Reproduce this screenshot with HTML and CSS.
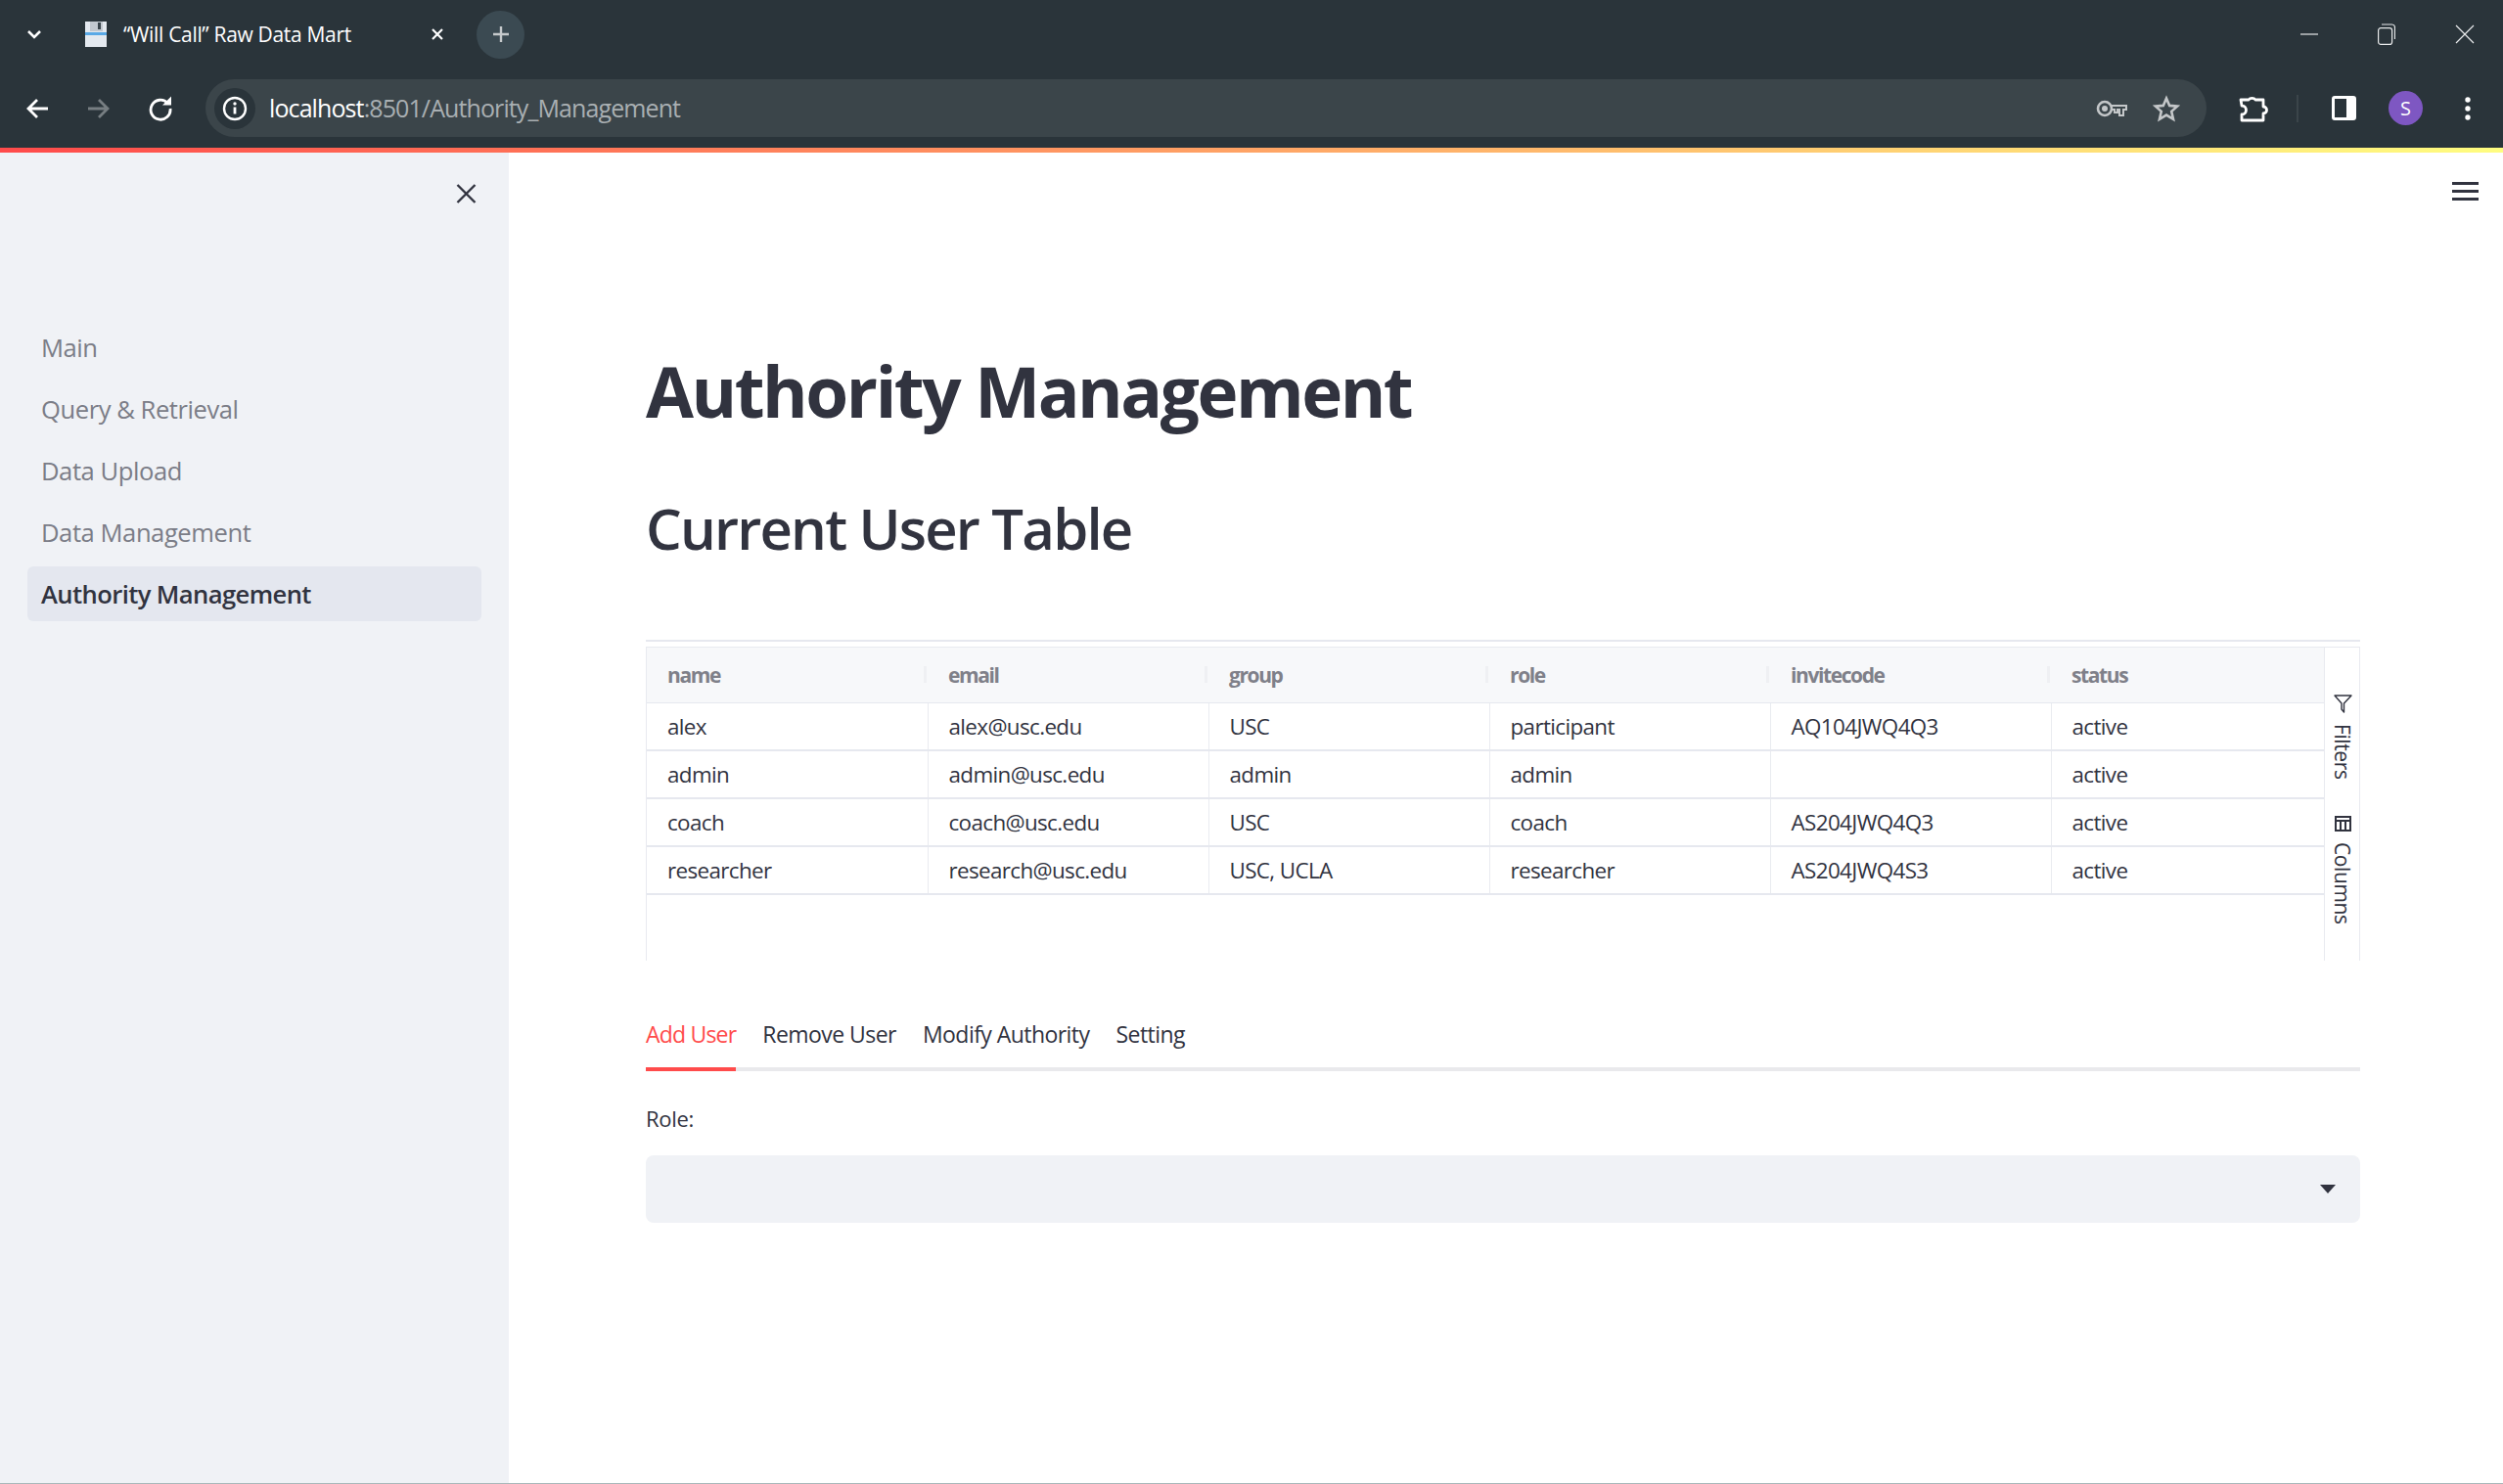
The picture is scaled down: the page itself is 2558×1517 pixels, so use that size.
FILE: index.html
```html
<!DOCTYPE html>
<html lang="en">
<head>
    <meta charset="UTF-8">
    <meta name="viewport" content="width=device-width, initial-scale=1.0">
    <title>Authority Management</title>
    <link rel="stylesheet" href="styles.css">
</head>
<body>
    <header class="browser">
        <div class="tabstrip">
            <svg class="tab-list" width="16" height="10" viewBox="0 0 16 10"><path d="M2 2l6 6 6-6" fill="none" stroke="#fff" stroke-width="2.6"/></svg>
            <svg class="favicon" width="26" height="28" viewBox="0 0 26 28"><path d="M2 1h22v26H2z" fill="#e4e9ef"/><path d="M7 1h13v10H7z" fill="#c2c8cf"/><path d="M15 2h3v7h-3z" fill="#39444b"/><path d="M2 12h22v3H2z" fill="#5aa9e6"/></svg>
            <span class="tab-title">“Will Call” Raw Data Mart</span>
            <svg class="tab-close" width="14" height="14" viewBox="0 0 14 14"><path d="M2 2l10 10M12 2L2 12" stroke="#fff" stroke-width="2.2"/></svg>
            <span class="new-tab"><svg width="18" height="18" viewBox="0 0 18 18"><path d="M9 1v16M1 9h16" stroke="#c5c9cb" stroke-width="2.4"/></svg></span>
            <div class="window-btns">
                <svg width="18" height="18" viewBox="0 0 18 18"><path d="M0 9h18" stroke="#e8eaeb" stroke-width="1.2"/></svg>
                <svg width="18" height="22" viewBox="0 0 18 22"><rect x=".6" y="4.6" width="14" height="16.8" rx="2.5" fill="none" stroke="#e8eaeb" stroke-width="1.2"/><path d="M4 1h10.5a3 3 0 0 1 3 3v12" fill="none" stroke="#e8eaeb" stroke-width="1.2"/></svg>
                <svg width="20" height="20" viewBox="0 0 20 20"><path d="M1 1l18 18M19 1L1 19" stroke="#e8eaeb" stroke-width="1.2"/></svg>
            </div>
        </div>
        <div class="toolbar">
            <svg class="nav-back" width="26" height="24" viewBox="0 0 26 24"><path d="M24 12H4M13 3l-9 9 9 9" fill="none" stroke="#fff" stroke-width="2.8"/></svg>
            <svg class="nav-forward" width="26" height="24" viewBox="0 0 26 24"><path d="M2 12h20M13 3l9 9-9 9" fill="none" stroke="#777e82" stroke-width="2.8"/></svg>
            <svg class="nav-reload" width="26" height="26" viewBox="0 0 26 26"><path d="M20.5 7.5A10 10 0 1 0 23 13" fill="none" stroke="#fff" stroke-width="2.8"/><path d="M15 9.5h9v-9z" fill="#fff"/></svg>
            <div class="omnibox">
                <span class="site-info"><svg width="26" height="26" viewBox="0 0 26 26"><circle cx="13" cy="13" r="11" fill="none" stroke="#fff" stroke-width="2.4"/><path d="M13 11.5v7" stroke="#fff" stroke-width="2.8"/><circle cx="13" cy="8" r="1.7" fill="#fff"/></svg></span>
                <span class="url"><span class="url-host">localhost</span>:8501/Authority_Management</span>
                <svg class="key" width="32" height="20" viewBox="0 0 32 20"><circle cx="9" cy="10" r="7" fill="none" stroke="#c4c7c9" stroke-width="2.6"/><circle cx="9" cy="10" r="3" fill="#c4c7c9"/><path d="M16 7h15v4h-3v6h-4v-6h-2v3h-3v-3h-3z" fill="none" stroke="#c4c7c9" stroke-width="2"/></svg>
                <svg class="star" width="28" height="28" viewBox="0 0 28 28"><path d="M14 3.500l3.200 7.400 8 .7-6 5.300 1.800 7.900L14 20.600l-7 4.200 1.800-7.900-6-5.300 8-.7z" fill="none" stroke="#c4c7c9" stroke-width="2.6"/></svg>
            </div>
            <svg class="puzzle" width="30" height="28" viewBox="0 0 30 28"><path d="M2 5h8a4 3 0 0 1 7 0h8v7a3.500 3.500 0 0 1 0 7v7H3v-6a4 4 0 0 0 0-9z" fill="none" stroke="#fff" stroke-width="2.8" stroke-linejoin="round"/></svg>
            <span class="tool-sep"></span>
            <svg class="side-panel" width="25" height="25" viewBox="0 0 25 25"><rect x="1.500" y="1.500" width="22" height="22" rx="1.500" fill="#2a343a" stroke="#fff" stroke-width="3"/><path d="M15 1.500h8.500v22H15z" fill="#fff"/></svg>
            <span class="avatar">S</span>
            <svg class="dots" width="6" height="24" viewBox="0 0 6 24"><circle cx="3" cy="3" r="2.7" fill="#fff"/><circle cx="3" cy="12" r="2.7" fill="#fff"/><circle cx="3" cy="21" r="2.7" fill="#fff"/></svg>
        </div>
    </header>
    <div class="deco-bar"></div>

    <div class="app">
        <aside class="sidebar">
            <div class="sidebar-top">
                <svg width="21" height="20" viewBox="0 0 21 20"><path d="M1.500 1l18 18M19.500 1l-18 18" stroke="#31333f" stroke-width="2.4"/></svg>
            </div>
            <nav class="nav">
                <a class="nav-link">Main</a>
                <a class="nav-link">Query &amp; Retrieval</a>
                <a class="nav-link">Data Upload</a>
                <a class="nav-link">Data Management</a>
                <a class="nav-link active">Authority Management</a>
            </nav>
        </aside>

        <main class="content">
            <div class="hamburger"><span></span><span></span><span></span></div>
            <h1>Authority Management</h1>
            <h2>Current User Table</h2>

            <div class="grid-wrap">
                <div class="grid-table">
                    <table>
                        <thead>
                            <tr>
                                <th>name</th>
                                <th>email</th>
                                <th>group</th>
                                <th>role</th>
                                <th>invitecode</th>
                                <th>status</th>
                            </tr>
                        </thead>
                        <tbody>
                            <tr><td>alex</td><td>alex@usc.edu</td><td>USC</td><td>participant</td><td>AQ104JWQ4Q3</td><td>active</td></tr>
                            <tr><td>admin</td><td>admin@usc.edu</td><td>admin</td><td>admin</td><td></td><td>active</td></tr>
                            <tr><td>coach</td><td>coach@usc.edu</td><td>USC</td><td>coach</td><td>AS204JWQ4Q3</td><td>active</td></tr>
                            <tr><td>researcher</td><td>research@usc.edu</td><td>USC, UCLA</td><td>researcher</td><td>AS204JWQ4S3</td><td>active</td></tr>
                        </tbody>
                    </table>
                </div>
                <div class="grid-side">
                    <svg class="filter-icon" width="19" height="19" viewBox="0 0 19 19"><path d="M1 1h17l-7.500 8v9l-2.500-3V9z" fill="none" stroke="#31333f" stroke-width="1.4" stroke-linejoin="round"/></svg>
                    <span class="side-label">Filters</span>
                    <svg class="columns-icon" width="17" height="16" viewBox="0 0 17 16"><path d="M1 1h15v14H1zM1 5h15M6 5v10M11 5v10" fill="none" stroke="#31333f" stroke-width="2"/></svg>
                    <span class="side-label">Columns</span>
                </div>
            </div>

            <div class="tabs">
                <span class="tab active">Add User</span>
                <span class="tab">Remove User</span>
                <span class="tab">Modify Authority</span>
                <span class="tab">Setting</span>
            </div>

            <label class="field-label">Role:</label>
            <div class="select">
                <svg width="16" height="9" viewBox="0 0 16 9"><path d="M0 0h16L8 9z" fill="#31333f"/></svg>
            </div>
        </main>
    </div>
</body>
</html>
```

FILE: styles.css
```css
* {
    box-sizing: border-box;
}
html, body {
    margin: 0;
    height: 100%;
}
body {
    display: flex;
    flex-direction: column;
    overflow: hidden;
    background-color: #fff;
    color: #31333f;
    font-family: "Open Sans", "Noto Sans", sans-serif;
    border-bottom: 1px solid #aab8ba;
}

/* browser chrome */
.browser {
    height: 151px;
    flex: none;
    background-color: #2a343a;
}
.tabstrip {
    height: 70px;
    display: flex;
    align-items: center;
}
.tab-list {
    margin-left: 27px;
}
.favicon {
    margin-left: 42px;
}
.tab-title {
    width: 314px;
    margin-left: 15px;
    color: #fff;
    font-size: 21px;
    letter-spacing: -0.32px;
    white-space: nowrap;
}
.new-tab {
    width: 49px;
    height: 49px;
    margin-left: 33px;
    display: flex;
    align-items: center;
    justify-content: center;
    border-radius: 50%;
    background-color: #3b4a52;
}
.window-btns {
    margin-left: auto;
    margin-right: 29px;
    display: flex;
    align-items: center;
    gap: 61px;
}
.toolbar {
    height: 81px;
    display: flex;
    align-items: center;
}
.nav-back {
    margin-left: 25px;
}
.nav-forward {
    margin-left: 37px;
}
.nav-reload {
    margin-left: 37px;
}
.omnibox {
    width: 2045px;
    height: 59px;
    margin-left: 33px;
    display: flex;
    align-items: center;
    border-radius: 30px;
    background-color: #3b454a;
}
.site-info {
    width: 42px;
    height: 42px;
    margin-left: 9px;
    display: flex;
    align-items: center;
    justify-content: center;
    border-radius: 50%;
    background-color: #2a343a;
}
.url {
    margin-left: 14px;
    padding-bottom: 2px;
    color: #a9afb2;
    font-size: 25px;
    letter-spacing: -0.9px;
    white-space: nowrap;
}
.url-host {
    color: #fff;
}
.key {
    margin-left: auto;
}
.star {
    margin-left: 26px;
    margin-right: 27px;
}
.puzzle {
    margin-left: 33px;
}
.tool-sep {
    width: 2px;
    height: 28px;
    margin-left: 29px;
    background-color: #3b454a;
}
.side-panel {
    margin-left: 34px;
}
.avatar {
    width: 35px;
    height: 35px;
    margin-left: 33px;
    display: flex;
    align-items: center;
    justify-content: center;
    border-radius: 50%;
    background-color: #7e57c2;
    color: #fff;
    font-size: 20px;
}
.dots {
    margin-left: 43px;
}
.deco-bar {
    height: 5px;
    flex: none;
    background-image: linear-gradient(90deg, #ff4b4b, #fffd80);
}

/* streamlit app */
.app {
    flex: 1;
    display: flex;
    min-height: 0;
}
.sidebar {
    width: 520px;
    flex: none;
    background-color: #f0f2f6;
    padding: 0 28px;
}
.sidebar-top {
    height: 171px;
    padding-top: 32px;
    padding-right: 5px;
    display: flex;
    justify-content: flex-end;
    align-items: flex-start;
}
.nav {
    display: flex;
    flex-direction: column;
    gap: 7px;
}
.nav-link {
    height: 56px;
    display: flex;
    align-items: center;
    padding-left: 14px;
    border-radius: 6px;
    color: #7b7d87;
    font-size: 25.6px;
    letter-spacing: -0.45px;
}
.nav-link.active {
    background-color: #e4e7ef;
    color: #31333f;
    font-weight: 600;
    letter-spacing: -0.6px;
}
.content {
    flex: 1;
    position: relative;
    padding: 0 146px 0 140px;
    min-width: 0;
}
.hamburger {
    position: absolute;
    top: 30px;
    right: 25px;
    width: 27px;
    display: flex;
    flex-direction: column;
    gap: 5px;
}
.hamburger span {
    height: 3px;
    background-color: #31333f;
}
h1 {
    margin: 199px 0 0;
    font-size: 71px;
    line-height: 90px;
    font-weight: 700;
    letter-spacing: -2.45px;
}
h2 {
    margin: 57px 0 0;
    font-size: 58px;
    line-height: 76px;
    font-weight: 600;
    letter-spacing: -1.8px;
}

/* data grid */
.grid-wrap {
    height: 328px;
    margin-top: 76px;
    padding-top: 5px;
    display: flex;
    border-top: 2px solid #e6e8ef;
}
.grid-table {
    width: 1715px;
    border-left: 1px solid #e8eaf0;
    border-top: 1px solid #e8eaf0;
}
table {
    width: 100%;
    table-layout: fixed;
    border-collapse: collapse;
    font-size: 22.4px;
    letter-spacing: -0.62px;
}
th {
    width: 287px;
    height: 56px;
    padding: 0 0 0 21px;
    background-color: #f7f8fa;
    border-bottom: 1px solid #e6e8ef;
    color: #7f8089;
    font-size: 21px;
    font-weight: 700;
    letter-spacing: -1.4px;
    text-align: left;
    position: relative;
}
th:last-child {
    width: auto;
}
th:not(:last-child)::after {
    content: "";
    position: absolute;
    top: 19px;
    right: 1px;
    width: 3px;
    height: 17px;
    background-color: #eff0f3;
}
td {
    height: 49px;
    padding: 0 0 0 21px;
    border-bottom: 2px solid #e6e8ef;
    border-right: 1px solid #e9ebf0;
}
td:last-child {
    border-right: none;
}
.grid-side {
    flex: 1;
    display: flex;
    flex-direction: column;
    align-items: center;
    padding-top: 48px;
    padding-left: 1px;
    border: 1px solid #e8eaf0;
    border-bottom: none;
    font-size: 21px;
    letter-spacing: -0.4px;
}
.side-label {
    margin-top: 11px;
    writing-mode: vertical-rl;
}
.columns-icon {
    margin-top: 37px;
}

/* tabs + select */
.tabs {
    height: 68px;
    margin-top: 45px;
    display: flex;
    gap: 27px;
    border-bottom: 4px solid #e9e9ec;
    font-size: 23px;
    letter-spacing: -0.55px;
}
.tab {
    height: 68px;
    padding-top: 14px;
}
.tab.active {
    color: #ff4b4b;
    border-bottom: 4px solid #ff4b4b;
    letter-spacing: -0.8px;
}
.field-label {
    display: block;
    margin-top: 33px;
    font-size: 22px;
    line-height: 30px;
    letter-spacing: -0.3px;
}
.select {
    height: 69px;
    margin-top: 23px;
    display: flex;
    align-items: center;
    justify-content: flex-end;
    padding-right: 25px;
    border-radius: 8px;
    background-color: #f0f2f6;
}
```
